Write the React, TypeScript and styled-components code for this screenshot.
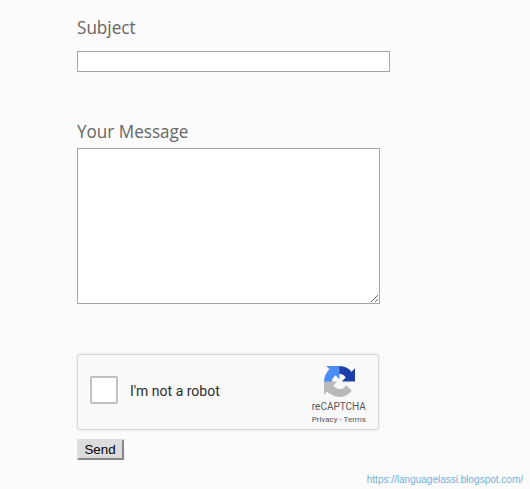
import React from "react";
import styled, { createGlobalStyle } from "styled-components";

const GlobalStyle = createGlobalStyle`
  *, *::before, *::after { box-sizing: border-box; }
  body { margin: 0; background: #fbfbfb; overflow: hidden; }
`;

const Page = styled.main`
  display: flex;
  flex-direction: column;
  height: 489px;
  padding: 15px 7px 2px 77px;
  background: #fbfbfb;
`;

const Form = styled.form`
  display: flex;
  flex-direction: column;
  align-items: flex-start;
`;

const Field = styled.div<{ $gap: number; $after: number }>`
  display: flex;
  flex-direction: column;
  align-items: flex-start;
  gap: ${(p) => p.$gap}px;
  margin-bottom: ${(p) => p.$after}px;
`;

const Label = styled.label`
  height: 24px;
  font: 18px/25px "Open Sans", "Noto Sans", sans-serif;
  color: #666;
  white-space: nowrap;
  transform: scaleX(0.95);
  transform-origin: left center;
`;

const TextInput = styled.input`
  width: 313px;
  height: 21px;
  padding: 1px 2px;
  border: 1px solid #a6a6a6;
  border-radius: 0;
  background: #fff;
`;

const TextArea = styled.textarea`
  display: block;
  width: 303px;
  height: 156px;
  border: 1px solid #a6a6a6;
  border-radius: 0;
  background: #fff;
  resize: both;
`;

const Captcha = styled.div`
  display: flex;
  align-items: center;
  width: 302px;
  height: 76px;
  padding-left: 13px;
  padding-right: 12px;
  border: 1px solid #d8d8d8;
  border-radius: 3px;
  background: #f9f9f9;
  box-shadow: 0 0 3px rgba(0, 0, 0, 0.1);
`;

const CheckBox = styled.span`
  width: 28px;
  height: 28px;
  margin: -4px 12px 0 -1px;
  border: 2px solid #c1c1c1;
  border-radius: 2px;
  background: #fff;
`;

const CaptchaText = styled.span`
  flex: 1;
  margin-top: -1px;
  font: 14px/17px Roboto, sans-serif;
  color: #2c2c2c;
`;

const Brand = styled.div`
  display: flex;
  flex-direction: column;
  align-items: center;
  align-self: flex-start;
  padding-top: 11px;
  color: #555;
  font-family: Roboto, sans-serif;
  white-space: nowrap;
`;

const BrandName = styled.span`
  margin-top: 4px;
  font-size: 10px;
  line-height: 12px;
`;

const BrandLinks = styled.span`
  margin-top: 2px;
  font-size: 8px;
  line-height: 10px;
`;

const SendButton = styled.button`
  width: 47px;
  height: 21px;
  margin-top: 9px;
  padding: 0 1px 0 0;
  border: 2px solid;
  border-color: #dedede #85858b #85858b #dedede;
  border-radius: 0;
  background: #dcdcdc;
  color: #000;
  font: 13.33px/16px "Liberation Sans", Arial, sans-serif;
`;

const Credit = styled.footer`
  margin-top: auto;
  align-self: flex-end;
  font: 10px/14px "Liberation Sans", Arial, sans-serif;
  color: #6fafe0;
`;

const Logo = styled.svg`
  margin-left: 1px;
`;

function CaptchaLogo() {
  return (
    <Logo width="31" height="31" viewBox="0 0 64 64" aria-hidden="true">
      <path fill="#1c3fa9" d="M64 31.955l-.033-1.37V4.687l-7.16 7.16C50.948 4.674 42.033.093 32.05.093c-10.4 0-19.622 4.96-25.458 12.64l11.736 11.86a15.55 15.55 0 0 1 4.754-5.334c2.05-1.6 4.952-2.906 8.968-2.906.485 0 .86.057 1.135.163 4.976.393 9.288 3.14 11.828 7.124l-8.307 8.307L64 31.953" />
      <path fill="#4a8df5" d="M31.862.094l-1.37.033H4.594l7.16 7.16C4.58 13.147 0 22.06 0 32.046c0 10.4 4.96 19.622 12.64 25.458L24.5 45.768a15.55 15.55 0 0 1-5.334-4.754c-1.6-2.05-2.906-4.952-2.906-8.968 0-.485.057-.86.163-1.135.393-4.976 3.14-9.288 7.124-11.828l8.307 8.307L31.86.095" />
      <path fill="#b9b9b9" d="M.001 32.045l.033 1.37v25.898l7.16-7.16c5.86 7.173 14.774 11.754 24.76 11.754 10.4 0 19.622-4.96 25.458-12.64l-11.736-11.86a15.55 15.55 0 0 1-4.754 5.334c-2.05 1.6-4.952 2.906-8.968 2.906-.485 0-.86-.057-1.135-.163-4.976-.393-9.288-3.14-11.828-7.124l8.307-8.307L.001 32.045" />
    </Logo>
  );
}

export default function App() {
  return (
    <Page>
      <GlobalStyle />
      <Form onSubmit={(e) => e.preventDefault()}>
        <Field $gap={12} $after={47}>
          <Label htmlFor="subject">Subject</Label>
          <TextInput id="subject" />
        </Field>
        <Field $gap={5} $after={50}>
          <Label htmlFor="message">Your Message</Label>
          <TextArea id="message" />
        </Field>
        <Captcha>
          <CheckBox role="checkbox" aria-checked={false} aria-label="I'm not a robot" />
          <CaptchaText>I'm not a robot</CaptchaText>
          <Brand>
            <CaptchaLogo />
            <BrandName>reCAPTCHA</BrandName>
            <BrandLinks>Privacy - Terms</BrandLinks>
          </Brand>
        </Captcha>
        <SendButton type="submit">Send</SendButton>
      </Form>
      <Credit>https://languagelassi.blogspot.com/</Credit>
    </Page>
  );
}
